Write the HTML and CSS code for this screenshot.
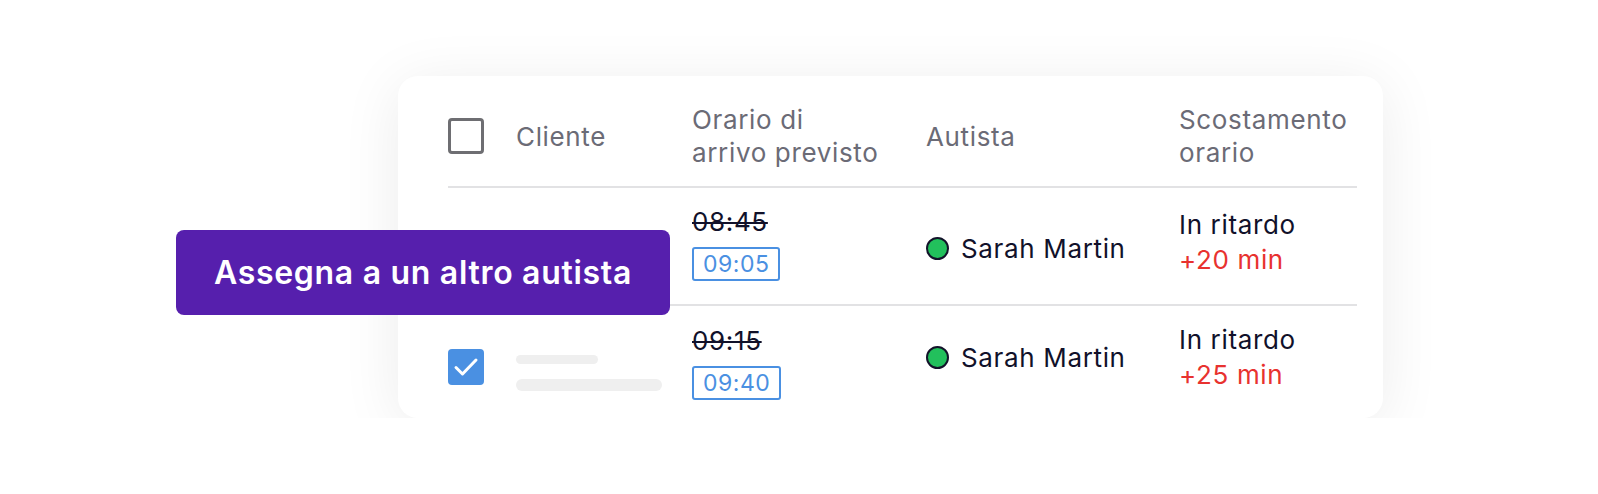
FILE: index.html
```html
<!DOCTYPE html>
<html lang="it">
<head>
    <meta charset="UTF-8">
    <meta name="viewport" content="width=device-width, initial-scale=1.0">
    <title>Consegne</title>
    <link rel="stylesheet" href="styles.css">
</head>
<body>
    <div class="card">
        <div class="row head">
            <div class="cell"><span class="checkbox"></span></div>
            <div class="cell">Cliente</div>
            <div class="cell">Orario di<br>arrivo previsto</div>
            <div class="cell">Autista</div>
            <div class="cell">Scostamento<br>orario</div>
        </div>
        <div class="row first">
            <div class="cell"></div>
            <div class="cell"></div>
            <div class="cell times">
                <s>08:45</s>
                <span class="badge">09:05</span>
            </div>
            <div class="cell driver"><span class="dot"></span>Sarah Martin</div>
            <div class="cell delay">In ritardo<span class="late">+20 min</span></div>
        </div>
        <div class="row last">
            <div class="cell pick">
                <span class="checkbox checked">
                    <svg width="36" height="36" viewBox="0 0 36 36"><polyline points="8,18.5 14.5,25 28,11" fill="none" stroke="#fff" stroke-width="3" stroke-linecap="round" stroke-linejoin="round"/></svg>
                </span>
            </div>
            <div class="cell skeleton">
                <span class="bar short"></span>
                <span class="bar long"></span>
            </div>
            <div class="cell times">
                <s>09:15</s>
                <span class="badge">09:40</span>
            </div>
            <div class="cell driver"><span class="dot"></span>Sarah Martin</div>
            <div class="cell delay">In ritardo<span class="late">+25 min</span></div>
        </div>
        <button class="assign">Assegna a un altro autista</button>
    </div>
</body>
</html>
```

FILE: styles.css
```css
body {
    margin: 0;
    background: #fff;
    font-family: Inter, "Noto Sans", sans-serif;
    color: #11112a;
}
.card {
    position: relative;
    box-sizing: border-box;
    width: 985px;
    height: 342px;
    margin: 76px 0 0 398px;
    padding: 0 26px 0 50px;
    background: #fff;
    border-radius: 20px;
    box-shadow: 0 8px 60px rgba(0, 0, 0, 0.08);
}
.row {
    display: grid;
    grid-template-columns: 68px 176px 234px 253px 1fr;
    align-items: center;
    padding: 17px 0 23px;
    border-bottom: 2px solid #e2e2e4;
    font-size: 26px;
    line-height: 33px;
    letter-spacing: 0.65px;
}
.row.head {
    padding: 27px 0 17px;
    color: #6b6b76;
}
.row.last {
    border-bottom: none;
    padding: 17px 0 16px;
}
.checkbox {
    display: block;
    box-sizing: border-box;
    width: 36px;
    height: 36px;
    border: 3px solid #6e6e72;
    border-radius: 4px;
}
.checkbox.checked {
    border: none;
    background: #4a90e2;
}
.checkbox svg {
    display: block;
}
.pick {
    margin-top: 10px;
}
.skeleton {
    display: flex;
    flex-direction: column;
    gap: 15px;
    margin-top: 22px;
}
.bar {
    display: block;
    background: #efefef;
    border-radius: 6px;
}
.bar.short {
    width: 82px;
    height: 9px;
}
.bar.long {
    width: 146px;
    height: 12px;
}
.times {
    display: flex;
    flex-direction: column;
    align-items: flex-start;
}
.times s {
    text-decoration-thickness: 2px;
}
.badge {
    box-sizing: border-box;
    margin-top: 9px;
    padding: 0 9px;
    height: 34px;
    line-height: 30px;
    border: 2px solid #4a90e2;
    border-radius: 3px;
    color: #4a90e2;
    font-size: 23px;
    letter-spacing: 0.5px;
}
.driver {
    display: flex;
    align-items: center;
    gap: 12px;
}
.first .driver {
    margin-top: 10px;
}
.last .driver {
    margin-bottom: 10px;
}
.dot {
    box-sizing: border-box;
    width: 23px;
    height: 23px;
    border: 2px solid #13132a;
    border-radius: 50%;
    background: #22c05c;
}
.delay {
    display: flex;
    flex-direction: column;
}
.first .delay {
    margin-bottom: 2px;
}
.last .delay {
    margin-bottom: 10px;
}
.late {
    margin-top: 2px;
    color: #e8322f;
}
.assign {
    position: absolute;
    left: -222px;
    top: 154px;
    width: 494px;
    height: 85px;
    border: none;
    border-radius: 8px;
    background: #561fad;
    color: #fff;
    font-family: Inter, "Noto Sans", sans-serif;
    font-size: 32px;
    font-weight: 600;
    letter-spacing: 0.7px;
}
```
